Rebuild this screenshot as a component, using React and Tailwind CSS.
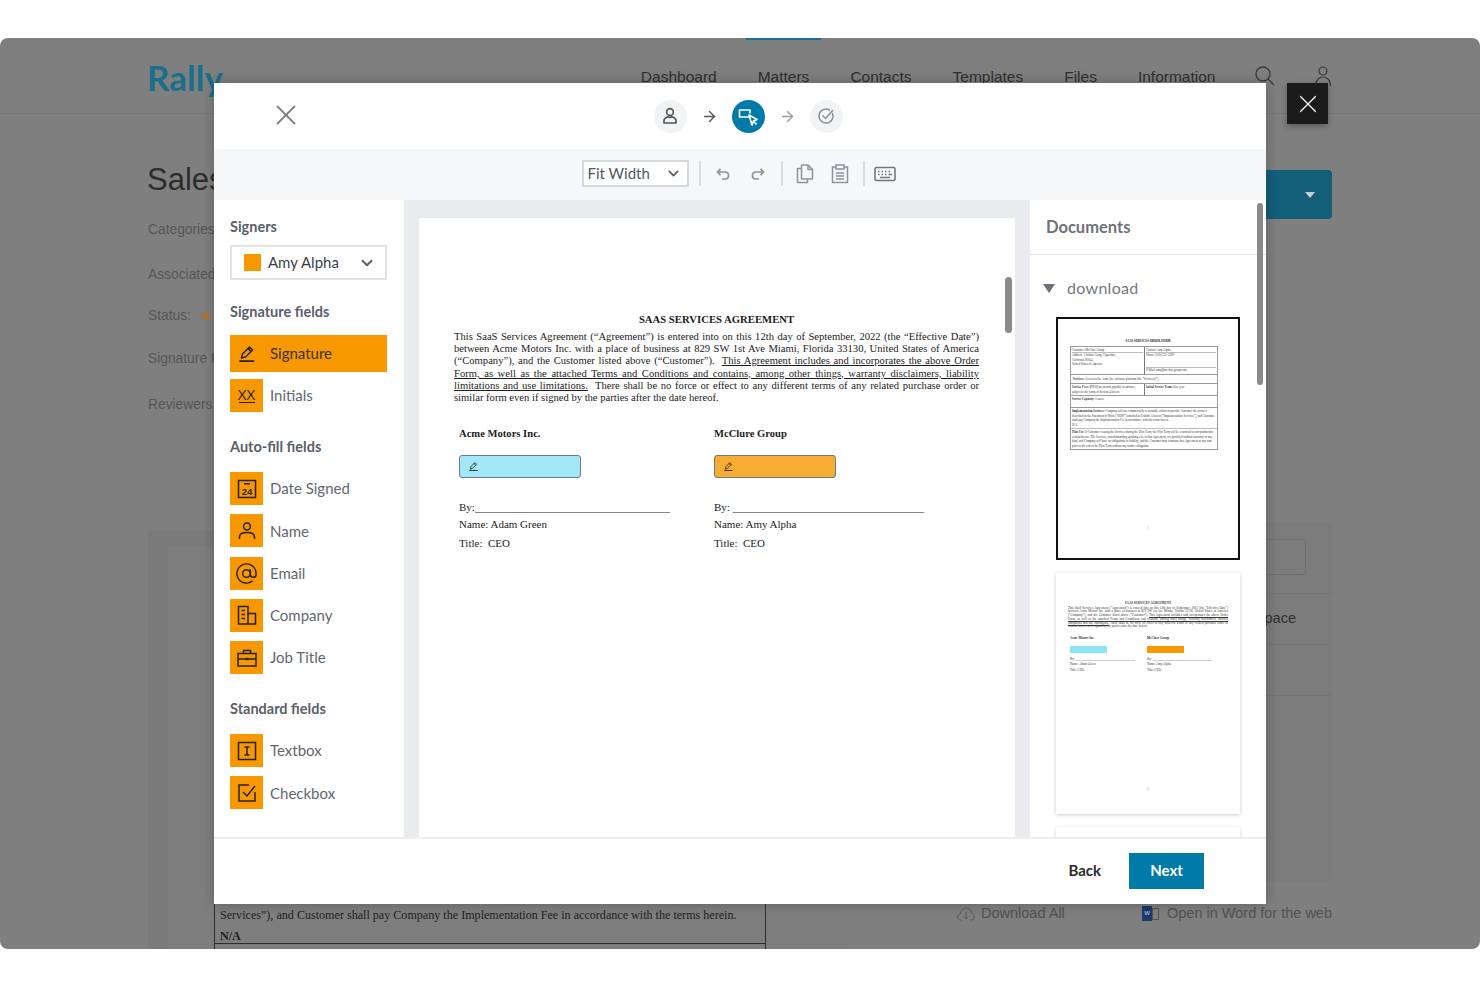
import React from "react";
import { ArrowRight, X, ChevronDown, AtSign } from "lucide-react";

const sans = "font-['Lato','Liberation_Sans',sans-serif]";

const Pen = ({ size = 20, color = "#1d1d1d", sw = 1.5 }) => (
  <svg width={size} height={size} viewBox="0 0 20 20" fill="none" stroke={color} strokeWidth={sw} strokeLinejoin="round" strokeLinecap="round">
    <path d="M4.5 14 5.5 10 12.5 3 15.5 6 8.5 13Z" />
    <path d="M11 4.5 14 7.5" />
    <path d="M3 17.2H16.5" strokeWidth={sw + 0.2} />
  </svg>
);

const I = ({ children }) => (
  <svg width="24" height="24" viewBox="0 0 24 24" fill="none" stroke="#26221a" strokeWidth="1.5">{children}</svg>
);

const icons = {
  xx: (
    <div className="flex flex-col items-center leading-none text-[#26221a]">
      <span className="text-[15px] font-normal leading-[12px] font-['Open_Sans',sans-serif]">XX</span>
      <span className="mt-[2px] h-[1.5px] w-[16px] bg-[#26221a]" />
    </div>
  ),
  date: (
    <I>
      <rect x="3.5" y="3.5" width="17" height="17" />
      <path d="M9 6.8H15" />
      <text x="12" y="17.5" textAnchor="middle" fontSize="9.5" fontWeight="700" fill="#26221a" stroke="none" fontFamily="Liberation Sans">24</text>
    </I>
  ),
  name: (
    <I>
      <circle cx="12" cy="7.5" r="3.4" />
      <path d="M4.5 20V18C4.5 15 7.5 13.5 12 13.5S19.5 15 19.5 18V20" />
    </I>
  ),
  email: <AtSign size={23} strokeWidth={1.5} color="#26221a" />,
  company: (
    <I>
      <path d="M3.5 21V3.5H13V21ZM13 10.5H20.5V21H13ZM3 21H21" />
      <path d="M6.5 7.5H10M6.5 11.5H10M6.5 15.5H10" />
    </I>
  ),
  job: (
    <I>
      <rect x="3" y="7.5" width="18" height="12.5" />
      <path d="M8.5 7.5V4.5H15.5V7.5M3 13H21" />
      <path d="M10.5 13H13.5" strokeWidth="2.4" />
    </I>
  ),
  text: (
    <I>
      <rect x="3.5" y="3.5" width="17" height="17" />
      <path d="M9.5 8H14.5M12 8V16M9.5 16H14.5" />
    </I>
  ),
  check: (
    <I>
      <path d="M14 4H4V20H20V11" />
      <path d="M8 11 12 15 20 5" />
    </I>
  ),
};

const Heading = ({ children, className = "" }) => (
  <div className={`text-[14.5px] font-bold leading-[18px] text-[#5a6069] ${className}`}>{children}</div>
);

const FieldRow = ({ icon, label }) => (
  <div className="flex h-[33px] items-center">
    <div className="flex h-[33px] w-[33px] items-center justify-center bg-[#f79800]">{icons[icon]}</div>
    <span className="ml-[7px] text-[15px] text-[#62676f]">{label}</span>
  </div>
);

const Sidebar = () => (
  <aside className="flex w-[190px] shrink-0 flex-col bg-white pl-[16px] pr-[17px] pt-[18px]">
    <Heading>Signers</Heading>
    <div className="mt-[9px] flex h-[35px] items-center border-2 border-[#dfe2e6] pl-[12px] pr-[9px]">
      <span className="h-[17px] w-[17px] bg-[#f79800]" />
      <span className="ml-[7px] flex-1 text-[15px] text-[#3b3f45]">Amy Alpha</span>
      <ChevronDown size={18} strokeWidth={2.4} color="#555b63" />
    </div>
    <Heading className="mt-[23px]">Signature fields</Heading>
    <div className="mt-[14px] flex h-[37px] items-center bg-[#f79800] pl-[7px]">
      <Pen size={20} color="#26221a" />
      <span className="ml-[13px] text-[15px] text-[#3a3320]">Signature</span>
    </div>
    <div className="mt-[7px]"><FieldRow icon="xx" label="Initials" /></div>
    <Heading className="mt-[26px]">Auto-fill fields</Heading>
    <div className="mt-[16px] flex flex-col gap-[9.3px]">
      <FieldRow icon="date" label="Date Signed" />
      <FieldRow icon="name" label="Name" />
      <FieldRow icon="email" label="Email" />
      <FieldRow icon="company" label="Company" />
      <FieldRow icon="job" label="Job Title" />
    </div>
    <Heading className="mt-[26px]">Standard fields</Heading>
    <div className="mt-[16px] flex flex-col gap-[9.3px]">
      <FieldRow icon="text" label="Textbox" />
      <FieldRow icon="check" label="Checkbox" />
    </div>
  </aside>
);

const J = ({ children, last }) => (
  <div className={last ? "" : "[text-align:justify] [text-align-last:justify]"}>{children}</div>
);

const SignColumn = ({ company, color, by, name, line }) => (
  <div className="w-[255px] pl-[5px]">
    <div className="text-[10.6px] font-bold leading-[12px]">{company}</div>
    <div className={`mt-[15px] flex h-[23px] w-[122px] items-center rounded-[3px] border border-[#6f7985] pl-[8px] ${color}`}>
      <Pen size={11} color="#333" sw={1.6} />
    </div>
    <div className="mt-[23px] flex items-end text-[11px] leading-[12px]">
      <span>{by}</span>
      <span className={`h-px bg-[#888] ${line}`} />
    </div>
    <div className="mt-[5px] text-[11px] leading-[12px]">Name: {name}</div>
    <div className="mt-[7px] text-[11px] leading-[12px]">Title:&nbsp; CEO</div>
  </div>
);

const DocumentPage = () => (
  <div className="relative min-w-0 flex-1 overflow-hidden bg-[#e9ebee] px-[15px] pt-[18px]">
    <div className="h-full bg-white pl-[35px] pr-[36px] pt-[95px] font-['Liberation_Serif',serif] text-[#1c1c1c]">
      <div className="text-center text-[10.7px] font-bold leading-[12px]">SAAS SERVICES AGREEMENT</div>
      <div className="mt-[6px] text-[10.6px] leading-[12.2px]">
        <J>This SaaS Services Agreement (“Agreement”) is entered into on this 12th day of September, 2022 (the “Effective Date”)</J>
        <J>between Acme Motors Inc. with a place of business at 829 SW 1st Ave Miami, Florida 33130, United States of America</J>
        <J>(“Company”), and the Customer listed above (“Customer”).&nbsp; <u>This Agreement includes and incorporates the above Order</u></J>
        <J><u>Form, as well as the attached Terms and Conditions and contains, among other things, warranty disclaimers, liability</u></J>
        <J><u>limitations and use limitations.</u>&nbsp; There shall be no force or effect to any different terms of any related purchase order or</J>
        <J last>similar form even if signed by the parties after the date hereof.</J>
      </div>
      <div className="mt-[24px] flex">
        <SignColumn company="Acme Motors Inc." color="bg-[#a2e7f8]" by="By:" name="Adam Green" line="w-[195px]" />
        <SignColumn company="McClure Group" color="bg-[#f6ac31]" by="By:" name="Amy Alpha" line="ml-[3px] w-[191px]" />
      </div>
    </div>
    <div className="absolute right-[18px] top-[77px] h-[56px] w-[7px] rounded-full bg-[#8a8a8a]" />
  </div>
);

const ThumbOne = () => (
  <div className="h-[243px] border-[2.5px] border-[#111] bg-white px-[12px] pt-[20px] font-['Liberation_Serif',serif] text-[3px] leading-[4.5px] text-[#333]">
    <div className="text-center font-bold text-[#111]">SAAS SERVICES ORDER FORM</div>
    <div className="mt-[2px] w-[148px] border border-[#999]">
      <div className="flex border-b border-[#999]">
        <div className="w-[74px] border-r border-[#777] p-[1px]">
          <div className="border-b border-[#bbb]">Customer: McClure Group</div>
          <div>Address: 1 Infinite Loop, Cupertino,<br />California 95014<br />United States of America</div>
          <div className="h-[6px]" />
        </div>
        <div className="flex-1 p-[1px]">
          <div className="border-b border-[#bbb]">Contact: Amy Alpha</div>
          <div className="h-[14px]">Phone: (510) 555-5599</div>
          <div className="border-t border-[#bbb]">E-Mail: amy@mccluregroup.com</div>
        </div>
      </div>
      <div className="border-b border-[#999] p-[2px]"><b>Services:</b> Access to the Acme Inc. software platform (the “Service(s)”).</div>
      <div className="flex border-b border-[#999]">
        <div className="w-[74px] border-r border-[#777] p-[1px]"><b>Service Fees:</b> $99.00 per month, payable in advance, subject to the terms of Section 4 herein</div>
        <div className="flex-1 p-[1px]"><b>Initial Service Term:</b> One year</div>
      </div>
      <div className="h-[12px] border-b border-[#999] p-[1px]"><b>Service Capacity:</b> 5 users</div>
      <div className="border-b border-[#bbb] p-[1px]"><b>Implementation Services:</b> Company will use commercially reasonable efforts to provide Customer the services described in the Statement of Work (“SOW”) attached as Exhibit A hereto (“Implementation Services”), and Customer shall pay Company the Implementation Fee in accordance with the terms herein.<br />N/A</div>
      <div className="p-[1px]"><b>Pilot Use:</b> If Customer is using the Services during the Pilot Term, the Pilot Term will be restricted to non-production evaluation use. The Services, notwithstanding anything else in this Agreement, are provided without warranty of any kind, and Company will have no obligations or liability, and the Customer may terminate this Agreement at any time prior to the end of the Pilot Term without any further obligation.</div>
    </div>
    <div className="mt-[76px] text-center text-[#777]">1</div>
  </div>
);

const ThumbTwo = () => (
  <div className="mt-[13px] h-[241px] bg-white px-[12px] pt-[29px] font-['Liberation_Serif',serif] text-[3.2px] leading-[3.7px] text-[#333] shadow-[0_1px_4px_rgba(0,0,0,0.2)]">
    <div className="text-center font-bold">SAAS SERVICES AGREEMENT</div>
    <div className="mt-[1px]">
      <J>This SaaS Services Agreement (“Agreement”) is entered into on this 12th day of September, 2022 (the “Effective Date”)</J>
      <J>between Acme Motors Inc. with a place of business at 829 SW 1st Ave Miami, Florida 33130, United States of America</J>
      <J>(“Company”), and the Customer listed above (“Customer”). <u>This Agreement includes and incorporates the above Order</u></J>
      <J><u>Form, as well as the attached Terms and Conditions and contains, among other things, warranty disclaimers, liability</u></J>
      <J><u>limitations and use limitations.</u> There shall be no force or effect to any different terms of any related purchase order or</J>
      <J last>similar form even if signed by the parties after the date hereof.</J>
    </div>
    <div className="mt-[8px] flex pl-[2px]">
      {[["Acme Motors Inc.", "bg-[#8ce4f7]", "Adam Green"], ["McClure Group", "bg-[#f79800]", "Amy Alpha"]].map(([c, b, n]) => (
        <div key={c} className="w-[77px]">
          <div className="font-bold">{c}</div>
          <div className={`mt-[5px] h-[7px] w-[37px] ${b}`} />
          <div className="mt-[5px] flex items-end">By:<span className="ml-px h-px w-[59px] bg-[#ccc]" /></div>
          <div className="mt-[2px]">Name: {n}</div>
          <div className="mt-[2px]">Title: CEO</div>
        </div>
      ))}
    </div>
    <div className="mt-[115px] text-center text-[#777]">2</div>
  </div>
);

const Documents = () => (
  <aside className="relative w-[236px] shrink-0 overflow-hidden bg-white">
    <div className="flex h-[55px] items-center border-b border-[#e4e6e9] pl-[16px] text-[16.5px] font-bold text-[#6e7278]">Documents</div>
    <div className="flex items-center pl-[13px] pt-[23px]">
      <span className="h-0 w-0 border-x-[6px] border-t-[9px] border-x-transparent border-t-[#6e7278]" />
      <span className="ml-[12px] text-[16px] leading-[20px] tracking-[0.3px] text-[#73777d]">download</span>
    </div>
    <div className="ml-[26px] mr-[26px] mt-[19px]">
      <ThumbOne />
      <ThumbTwo />
      <div className="mt-[13px] h-[40px] bg-white shadow-[0_1px_4px_rgba(0,0,0,0.2)]" />
    </div>
    <div className="absolute right-[3px] top-[3px] h-[182px] w-[6px] rounded-full bg-[#8a8a8a]" />
  </aside>
);

const ToolDivider = ({ className = "" }) => <span className={`block h-[25px] w-[2px] bg-[#d9dce0] ${className}`} />;

const Modal = () => (
  <div className={`absolute left-[214px] top-[45px] z-10 flex h-[821px] w-[1052px] flex-col bg-white shadow-[0_0_12px_rgba(0,0,0,0.25)] ${sans}`}>
    <header className="relative flex h-[66px] shrink-0 items-center justify-center">
      <button className="absolute left-[55px] top-[15px]">
        <X size={34} strokeWidth={1.3} color="#7c8288" />
      </button>
      <div className="ml-[16px] flex items-center">
        <span className="flex h-[33px] w-[33px] items-center justify-center rounded-full bg-[#f2f3f5]">
          <svg width="18" height="18" viewBox="0 0 18 18" fill="none" stroke="#53585f" strokeWidth="1.7">
            <circle cx="9" cy="5" r="3.4" />
            <path d="M3 16V13.5C3 11.5 5.5 10.3 7 9.8 8.5 10.6 9.5 10.6 11 9.8 12.5 10.3 15 11.5 15 13.5V16Z" strokeLinejoin="round" />
          </svg>
        </span>
        <ArrowRight className="mx-[14px]" size={17} strokeWidth={2} color="#53585f" />
        <span className="flex h-[33px] w-[33px] items-center justify-center rounded-full bg-[#007ba7]">
          <svg width="24" height="24" viewBox="0 0 24 24" fill="none" stroke="#fff" strokeWidth="1.7" strokeLinejoin="round">
            <path d="M14 13H3.5V6H14V9.5" />
            <path d="M13 11 21 15.5 17.5 17 16 21Z" />
            <path d="M17.5 17 20.5 20.5" />
          </svg>
        </span>
        <ArrowRight className="mx-[14px]" size={17} strokeWidth={2} color="#9a9ea4" />
        <span className="flex h-[33px] w-[33px] items-center justify-center rounded-full bg-[#f2f3f5]">
          <svg width="18" height="18" viewBox="0 0 18 18" fill="none" stroke="#8a8e94" strokeWidth="1.5" strokeLinecap="round">
            <path d="M15.5 6.5A7 7 0 1 1 12.5 3" />
            <path d="M5.8 8.8 8.6 11.5 15.6 3.6" />
          </svg>
        </span>
      </div>
    </header>
    <div className="flex h-[51px] shrink-0 items-center justify-center bg-[#f6f7f9] pb-[2px]">
      <div className="mr-[3px] flex items-center">
        <div className="flex h-[27px] w-[107px] items-center border-2 border-[#d5d8dc] bg-white pl-[4px] pr-[5px]">
          <span className="flex-1 text-[15px] text-[#53585f]">Fit Width</span>
          <ChevronDown size={17} strokeWidth={2.4} color="#5b6068" />
        </div>
        <ToolDivider className="ml-[10px]" />
        <svg className="ml-[15px]" width="14" height="14" viewBox="0 0 14 14" fill="none" stroke="#8f9399" strokeWidth="1.7">
          <path d="M1.5 5H9C11 5 12.5 6.5 12.5 8.5S11 12 9 12H6" />
          <path d="M4.5 1.8 1.5 5 4.5 8.2" />
        </svg>
        <svg className="ml-[21px]" width="14" height="14" viewBox="0 0 14 14" fill="none" stroke="#8f9399" strokeWidth="1.7">
          <path d="M12.5 5H5C3 5 1.5 6.5 1.5 8.5S3 12 5 12H8" />
          <path d="M9.5 1.8 12.5 5 9.5 8.2" />
        </svg>
        <ToolDivider className="ml-[16px]" />
        <svg className="ml-[13px]" width="18" height="20" viewBox="0 0 18 20" fill="none" stroke="#8f9399" strokeWidth="1.5" strokeLinejoin="round">
          <path d="M5.5 4.5H1.5V18.5H11.5V15" />
          <path d="M5.5 1H12L16.5 5.5V15H5.5Z" />
          <path d="M12 1V5.5H16.5" />
        </svg>
        <svg className="ml-[17px]" width="18" height="20" viewBox="0 0 18 20" fill="none" stroke="#8f9399" strokeWidth="1.5">
          <path d="M5 3H1.5V18.5H16.5V3H13" />
          <path d="M5 1H13V5H5Z" />
          <path d="M5 9H13M5 12H13M5 15H13" />
        </svg>
        <ToolDivider className="ml-[14px]" />
        <svg className="ml-[9px]" width="22" height="16" viewBox="0 0 22 16" fill="none" stroke="#72767c" strokeWidth="1.6">
          <rect x="1" y="1.5" width="20" height="13" rx="1.5" />
          <path d="M4 5.5H5.5M7.5 5.5H9M11 5.5H12.5M14.5 5.5H16M4 8.5H5.5M7.5 8.5H9M11 8.5H12.5M14.5 8.5H18M6 11.5H16" strokeWidth="1.3" />
        </svg>
      </div>
    </div>
    <div className="flex min-h-0 flex-1">
      <Sidebar />
      <DocumentPage />
      <Documents />
    </div>
    <footer className="flex h-[67px] shrink-0 items-center justify-end border-t-2 border-[#eceef0] pb-[2px] pr-[62px]">
      <span className="mr-[28px] text-[15px] font-bold text-[#2b2b2b]">Back</span>
      <button className="h-[36px] w-[75px] bg-[#007ba7] text-[15px] font-bold text-white">Next</button>
    </footer>
  </div>
);

const Background = () => (
  <div className="relative mx-auto mb-[38px] mt-[38px] flex h-[911px] flex-col overflow-hidden rounded-[8px] bg-[#7f7f7f] font-['Liberation_Sans',sans-serif]">
    <header className="flex h-[76px] shrink-0 border-b border-[#767676] pl-[147px]">
      <div className={`mt-[15px] text-[35px] font-bold leading-[48px] text-[#1a6f8a] ${sans}`}>Rally</div>
      <nav className="ml-[418px] mt-[30px] flex h-[20px] gap-[41px] text-[15.5px] leading-[18px] text-[#2f2f2f]">
        <span>Dashboard</span>
        <span className="relative">
          Matters
          <span className="absolute -left-[12px] -right-[12px] -top-[30px] h-[2px] bg-[#19708f]" />
        </span>
        <span>Contacts</span>
        <span>Templates</span>
        <span>Files</span>
        <span>Information</span>
      </nav>
      <svg className="ml-[40px] mt-[28px]" width="20" height="20" viewBox="0 0 20 20" fill="none" stroke="#3a3a3a" strokeWidth="1.3">
        <circle cx="8" cy="8" r="7" />
        <path d="M13 13 19 19" />
      </svg>
      <svg className="ml-[39px] mt-[27px]" width="18" height="22" viewBox="0 0 18 22" fill="none" stroke="#3a3a3a" strokeWidth="1.2">
        <circle cx="9" cy="6" r="4" />
        <path d="M1.5 21C1.5 15 5 12 9 12S16.5 15 16.5 21" />
      </svg>
    </header>
    <main className="flex min-h-0 flex-1 flex-col pl-[148px] pr-[148px]">
      <div className="mt-[56px] flex h-[49px] items-start justify-between">
        <h1 className="-ml-px -mt-[8px] text-[31px] font-normal leading-[36px] text-[#2c2c2c]">Sales</h1>
        <div className="flex h-[49px] w-[140px] items-center justify-end rounded-r-[4px] bg-[#135f79] pr-[17px]">
          <span className="h-0 w-0 border-x-[5px] border-t-[6px] border-x-transparent border-t-[#c2cdd2]" />
        </div>
      </div>
      <div className="text-[13.8px] leading-[16px] text-[#565656]">
        <div className="mt-[3px]">Categories</div>
        <div className="mt-[29px]">Associated</div>
        <div className="mt-[25px] flex items-center">Status:<span className="ml-[11px] h-[8px] w-[8px] rounded-full bg-[#a6743e]" /></div>
        <div className="mt-[27px]">Signature F</div>
        <div className="mt-[30px]">Reviewers:</div>
      </div>
      <div className="mt-[118px] flex min-h-0 flex-1 gap-[22px]">
        <div className="flex w-[697px] flex-col bg-[#7a7a7a] pl-[20px] pt-[16px]">
          <div className="flex-1 bg-[#7e7e7e] pl-[46px]">
            <div className="mt-[338px] w-[552px] border-x border-[#2e2e2e] px-[5px] font-['Liberation_Serif',serif] text-[12.1px] leading-[21px] text-[#1f1f1f]">
              <div className="whitespace-nowrap">Services described in the Statement of Work (“SOW”) attached as Exhibit A hereto (“Implementation</div>
              <div className="-mt-[1px] whitespace-nowrap">Services”), and Customer shall pay Company the Implementation Fee in accordance with the terms herein.</div>
              <div className="h-[17px] font-bold">N/A</div>
            </div>
            <div className="h-[20px] w-[552px] border-x border-t border-[#2e2e2e]" />
          </div>
        </div>
        <div className="-mt-[9px] flex w-[465px] flex-col">
          <div className="h-[360px] overflow-hidden rounded-b-[8px] bg-[#7c7c7c] pt-[17px]">
            <div className="ml-[374px] h-[36px] w-[65px] rounded-r-[3px] border border-[#6e6e6e]" />
            <div className="mt-[18px] flex h-[52px] items-center justify-end border-y border-[#767676] pr-[36px] text-[14.5px] text-[#2f2f2f]">space</div>
            <div className="h-[51px] border-b border-[#767676]" />
          </div>
          <div className="mt-[21px] flex items-center justify-between pl-[90px] text-[14.5px] text-[#525252]">
            <span className="flex items-center gap-[6px]">
              <svg width="18" height="14" viewBox="0 0 18 14" fill="none" stroke="#5a5a5a" strokeWidth="1">
                <path d="M5 13H4C2 13 .8 11.5.8 9.8S2 6.8 3.5 6.5C4 3 6.5 1 9 1S14 3 14.5 6C16.2 6.3 17.2 8 17.2 9.6S16 13 14 13H13" />
                <path d="M9 5V12M6.5 9.5 9 12 11.5 9.5" />
              </svg>
              Download All
            </span>
            <span className="flex items-center gap-[8px]">
              <span className="flex h-[15px] w-[17px] items-center">
                <span className="flex h-[15px] w-[10px] items-center justify-center bg-[#1d3a6b] text-[6px] font-bold text-[#aab]">W</span>
                <span className="h-[12px] w-[7px] border border-[#555]" />
              </span>
              Open in Word for the web
            </span>
          </div>
        </div>
      </div>
    </main>
    <button className="absolute left-[1287px] top-[45px] z-20 flex h-[41px] w-[41px] items-center justify-center bg-[#1b1b1b] shadow-[0_2px_6px_rgba(0,0,0,0.3)]">
      <X size={30} strokeWidth={1} color="#fff" />
    </button>
    <Modal />
  </div>
);

export default function App() {
  return (
    <div className="h-[987px] overflow-hidden bg-white">
      <div className="flow-root"><Background /></div>
    </div>
  );
}
